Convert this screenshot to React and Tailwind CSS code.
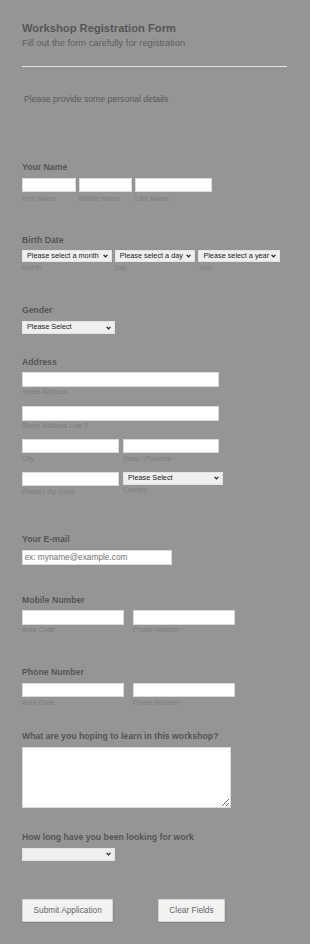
import { useState } from 'react';

function Label({ children, className = '' }) {
  return (
    <div className={`text-[8.7px] leading-[10px] font-bold text-[#555555] ${className}`}>{children}</div>
  );
}

function Sub({ children, className = '' }) {
  return <div className={`text-[6.9px] leading-[8px] text-[#7e7e7e] whitespace-nowrap ${className}`}>{children}</div>;
}

function TextInput({ className = '', ...props }) {
  return (
    <input
      type="text"
      className={`block bg-white border border-[#dadada] px-[1.5px] text-[8.3px] text-[#333333] placeholder:text-[#6f6f6f] outline-none ${className}`}
      {...props}
    />
  );
}

function Select({ className = '', children }) {
  return (
    <div className={`relative ${className}`}>
      <select className="block w-full h-full appearance-none bg-[#efefef] border border-[#e3e3e3] rounded-none pl-[4px] pr-[8px] text-[7.3px] text-[#222222] outline-none">
        {children}
      </select>
      <svg
        className="pointer-events-none absolute right-[4px] top-1/2 -translate-y-1/2 w-[5px] h-[4px]"
        viewBox="0 0 10 8"
      >
        <path d="M1.2 1.8 L5 5.8 L8.8 1.8" stroke="#222222" strokeWidth="2.6" fill="none" />
      </svg>
    </div>
  );
}

function PhoneRow() {
  return (
    <div className="mt-[5.5px] flex items-start">
      <div className="flex flex-col">
        <TextInput className="w-[102px] h-[14.5px]" />
        <Sub className="mt-[1.5px]">Area Code</Sub>
      </div>
      <div className="w-[9px] h-[14.5px] flex items-center justify-center text-[8px] text-[#6f6f6f]">-</div>
      <div className="flex flex-col">
        <TextInput className="w-[101.7px] h-[14.5px]" />
        <Sub className="mt-[1.5px]">Phone Number</Sub>
      </div>
    </div>
  );
}

export default function App() {
  const [form, setForm] = useState({ email: '', learn: '' });

  const handleClear = () => setForm({ email: '', learn: '' });

  return (
    <div className="min-h-screen bg-[#959595] [font-family:'Liberation_Sans',Arial,sans-serif]">
      <form className="px-[22px] pt-[22px] pb-[20px]" onSubmit={(e) => e.preventDefault()}>
        <h1 className="text-[11.2px] leading-[13px] font-bold text-[#555555]">Workshop Registration Form</h1>
        <p className="mt-[3px] text-[9.3px] leading-[11px] text-[#5f5f5f]">Fill out the form carefully for registration</p>
        <div className="mt-[17px] w-[265px] h-px bg-[#e4e4e4]" />
        <p className="mt-[27px] ml-[2px] text-[8.7px] leading-[10px] text-[#5a5a5a]">Please provide some personal details</p>

        {/* name */}
        <Label className="mt-[58px]">Your Name</Label>
        <div className="mt-[6px] flex items-start gap-[3px]">
          <div className="flex flex-col">
            <TextInput className="w-[53.7px] h-[14px]" />
            <Sub className="mt-[3px]">First Name</Sub>
          </div>
          <div className="flex flex-col">
            <TextInput className="w-[53.3px] h-[14px]" />
            <Sub className="mt-[3px]">Middle Name</Sub>
          </div>
          <div className="flex flex-col">
            <TextInput className="w-[77.3px] h-[14px]" />
            <Sub className="mt-[3px]">Last Name</Sub>
          </div>
        </div>

        {/* birth date */}
        <Label className="mt-[32px]">Birth Date</Label>
        <div className="mt-[4.5px] flex items-start gap-[3px]">
          <div className="flex flex-col">
            <Select className="w-[89.7px] h-[12.5px]">
              <option>Please select a month</option>
            </Select>
            <Sub className="mt-[2px]">Month</Sub>
          </div>
          <div className="flex flex-col">
            <Select className="w-[80.7px] h-[12.5px]">
              <option>Please select a day</option>
            </Select>
            <Sub className="mt-[2px]">Day</Sub>
          </div>
          <div className="flex flex-col">
            <Select className="w-[82px] h-[12.5px]">
              <option>Please select a year</option>
            </Select>
            <Sub className="mt-[2px]">Year</Sub>
          </div>
        </div>

        {/* gender */}
        <Label className="mt-[33px]">Gender</Label>
        <Select className="mt-[6px] w-[93.3px] h-[13px]">
          <option>Please Select</option>
          <option>Male</option>
          <option>Female</option>
        </Select>

        {/* address */}
        <Label className="mt-[23px]">Address</Label>
        <TextInput className="mt-[5px] w-[197px] h-[14.5px]" />
        <Sub className="mt-[1.5px]">Street Address</Sub>
        <TextInput className="mt-[10px] w-[197px] h-[14.5px]" />
        <Sub className="mt-[1px]">Street Address Line 2</Sub>
        <div className="mt-[9px] flex items-start gap-[4.3px]">
          <div className="flex flex-col">
            <TextInput className="w-[96.7px] h-[14.5px]" />
            <Sub className="mt-[1.5px]">City</Sub>
          </div>
          <div className="flex flex-col">
            <TextInput className="w-[96px] h-[14.5px]" />
            <Sub className="mt-[1.5px]">State / Province</Sub>
          </div>
        </div>
        <div className="mt-[9px] flex items-start gap-[4.3px]">
          <div className="flex flex-col">
            <TextInput className="w-[96.7px] h-[14.5px]" />
            <Sub className="mt-[1.5px]">Postal / Zip Code</Sub>
          </div>
          <div className="flex flex-col">
            <Select className="w-[99.7px] h-[13.5px]">
              <option>Please Select</option>
            </Select>
            <Sub className="mt-[1px]">Country</Sub>
          </div>
        </div>

        {/* email */}
        <Label className="mt-[38.5px]">Your E-mail</Label>
        <TextInput
          className="mt-[6px] w-[150.3px] h-[14.5px]"
          placeholder="ex: myname@example.com"
          value={form.email}
          onChange={(e) => setForm({ ...form, email: e.target.value })}
        />

        <Label className="mt-[30px]">Mobile Number</Label>
        <PhoneRow />

        <Label className="mt-[33px]">Phone Number</Label>
        <PhoneRow />

        <Label className="mt-[24.5px]">What are you hoping to learn in this workshop?</Label>
        <textarea
          className="block mt-[6px] w-[208.5px] h-[61px] bg-white border border-[#dadada] text-[8.3px] outline-none"
          value={form.learn}
          onChange={(e) => setForm({ ...form, learn: e.target.value })}
        />

        <Label className="mt-[24px]">How long have you been looking for work</Label>
        <Select className="mt-[5.5px] w-[93.3px] h-[13.5px]">
          <option></option>
          <option>Less than 3 months</option>
          <option>3 - 6 months</option>
          <option>More than 6 months</option>
        </Select>

        <div className="mt-[38px] flex gap-[45px]">
          <button
            type="submit"
            className="w-[91.3px] h-[22.5px] bg-[#f2f2f2] border border-[#d2d2d2] rounded-[1px] shadow-[0_1px_1px_rgba(0,0,0,0.12)] text-[8.3px] text-[#666666]"
          >
            Submit Application
          </button>
          <button
            type="button"
            onClick={handleClear}
            className="w-[66.4px] h-[22.5px] bg-[#f2f2f2] border border-[#d2d2d2] rounded-[1px] shadow-[0_1px_1px_rgba(0,0,0,0.12)] text-[8.3px] text-[#666666]"
          >
            Clear Fields
          </button>
        </div>
      </form>
    </div>
  );
}
